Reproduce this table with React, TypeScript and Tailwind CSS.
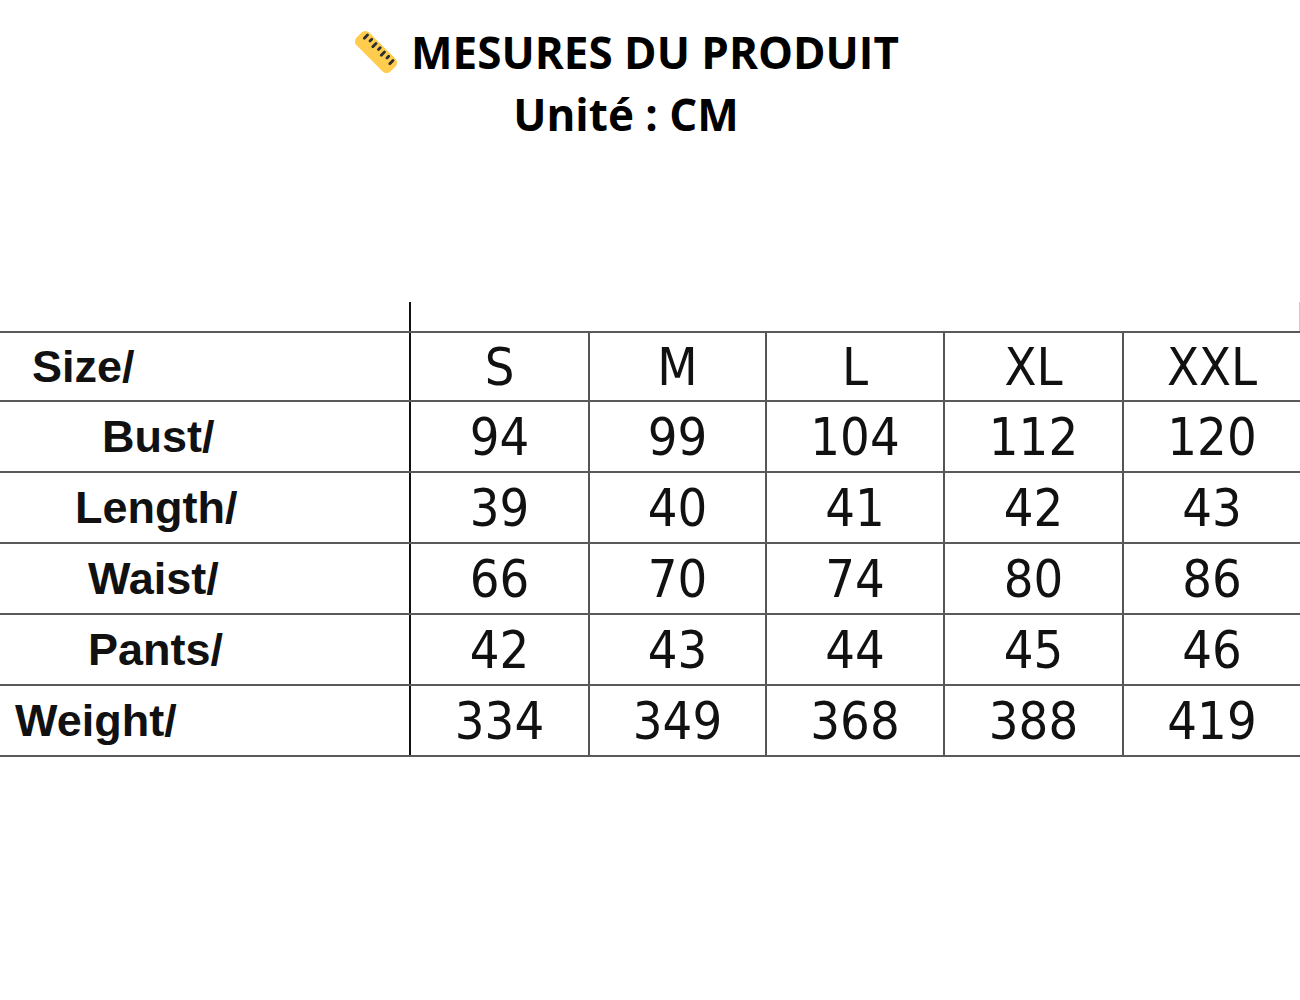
import React from 'react'

const sizes = ['S', 'M', 'L', 'XL', 'XXL']

const rows: { label: string; pad: string; values: string[] }[] = [
  { label: 'Bust/', pad: 'pl-[102px]', values: ['94', '99', '104', '112', '120'] },
  { label: 'Length/', pad: 'pl-[75px]', values: ['39', '40', '41', '42', '43'] },
  { label: 'Waist/', pad: 'pl-[88px]', values: ['66', '70', '74', '80', '86'] },
  { label: 'Pants/', pad: 'pl-[88px]', values: ['42', '43', '44', '45', '46'] },
  { label: 'Weight/', pad: 'pl-[15px]', values: ['334', '349', '368', '388', '419'] },
]

const colWidths = ['w-[179px]', 'w-[177px]', 'w-[178px]', 'w-[179px]', 'w-[176px]']

function RulerIcon() {
  return (
    <svg width="46" height="46" viewBox="0 0 46 46" className="shrink-0 overflow-visible">
      <g transform="rotate(45 23 23)">
        <rect x="-1" y="14" width="48" height="18" rx="5.5" fill="#FFCC4D" />
        <g stroke="#292F33" strokeWidth="2.8" strokeLinecap="round">
          <line x1="5" y1="17" x2="5" y2="21.5" />
          <line x1="11" y1="17" x2="11" y2="19.5" />
          <line x1="17" y1="17" x2="17" y2="21.5" />
          <line x1="23" y1="17" x2="23" y2="19.5" />
          <line x1="29" y1="17" x2="29" y2="21.5" />
          <line x1="35" y1="17" x2="35" y2="19.5" />
          <line x1="41" y1="17" x2="41" y2="21.5" />
        </g>
      </g>
    </svg>
  )
}

function ValueCells({ values }: { values: string[] }) {
  return (
    <>
      {values.map((v, i) => (
        <div
          key={i}
          className={`${colWidths[i]} h-full flex items-center justify-center ${
            i < values.length - 1 ? 'border-r-2 border-[#555]' : ''
          } font-['Liberation_Sans_Narrow','DejaVu_Sans_Condensed',sans-serif] text-[52px] text-[#111]`}
        >
          {v}
        </div>
      ))}
    </>
  )
}

export default function App() {
  return (
    <div className="w-[1300px] h-[1000px] bg-white overflow-hidden">
      {/* Title */}
      <div className="pt-[21px] pr-[48px] flex flex-col items-center font-['Open_Sans',sans-serif] font-bold text-[44px] leading-[62px] text-black">
        <div className="flex items-center gap-[12px]">
          <RulerIcon />
          <span>MESURES DU PRODUIT</span>
        </div>
        <div>Unité : CM</div>
      </div>

      {/* Table */}
      <div className="mt-[157px] w-[1300px]">
        <div className="flex h-[29px]">
          <div className="w-[411px] border-r-2 border-[#111]" />
          <div className="flex-1 border-r border-[#ccc]" />
        </div>
        <div className="flex h-[71px] border-y-2 border-[#5a5a5a]">
          <div className="w-[411px] h-full flex items-center pl-[32px] border-r-2 border-[#111] font-['Liberation_Sans',sans-serif] font-bold text-[45px] text-[#111]">
            Size/
          </div>
          <ValueCells values={sizes} />
        </div>
        {rows.map((r) => (
          <div key={r.label} className="flex h-[71px] border-b-2 border-[#5a5a5a]">
            <div
              className={`w-[411px] h-full flex items-center ${r.pad} border-r-2 border-[#111] font-['Liberation_Sans',sans-serif] font-bold text-[45px] text-[#111]`}
            >
              {r.label}
            </div>
            <ValueCells values={r.values} />
          </div>
        ))}
      </div>
    </div>
  )
}
